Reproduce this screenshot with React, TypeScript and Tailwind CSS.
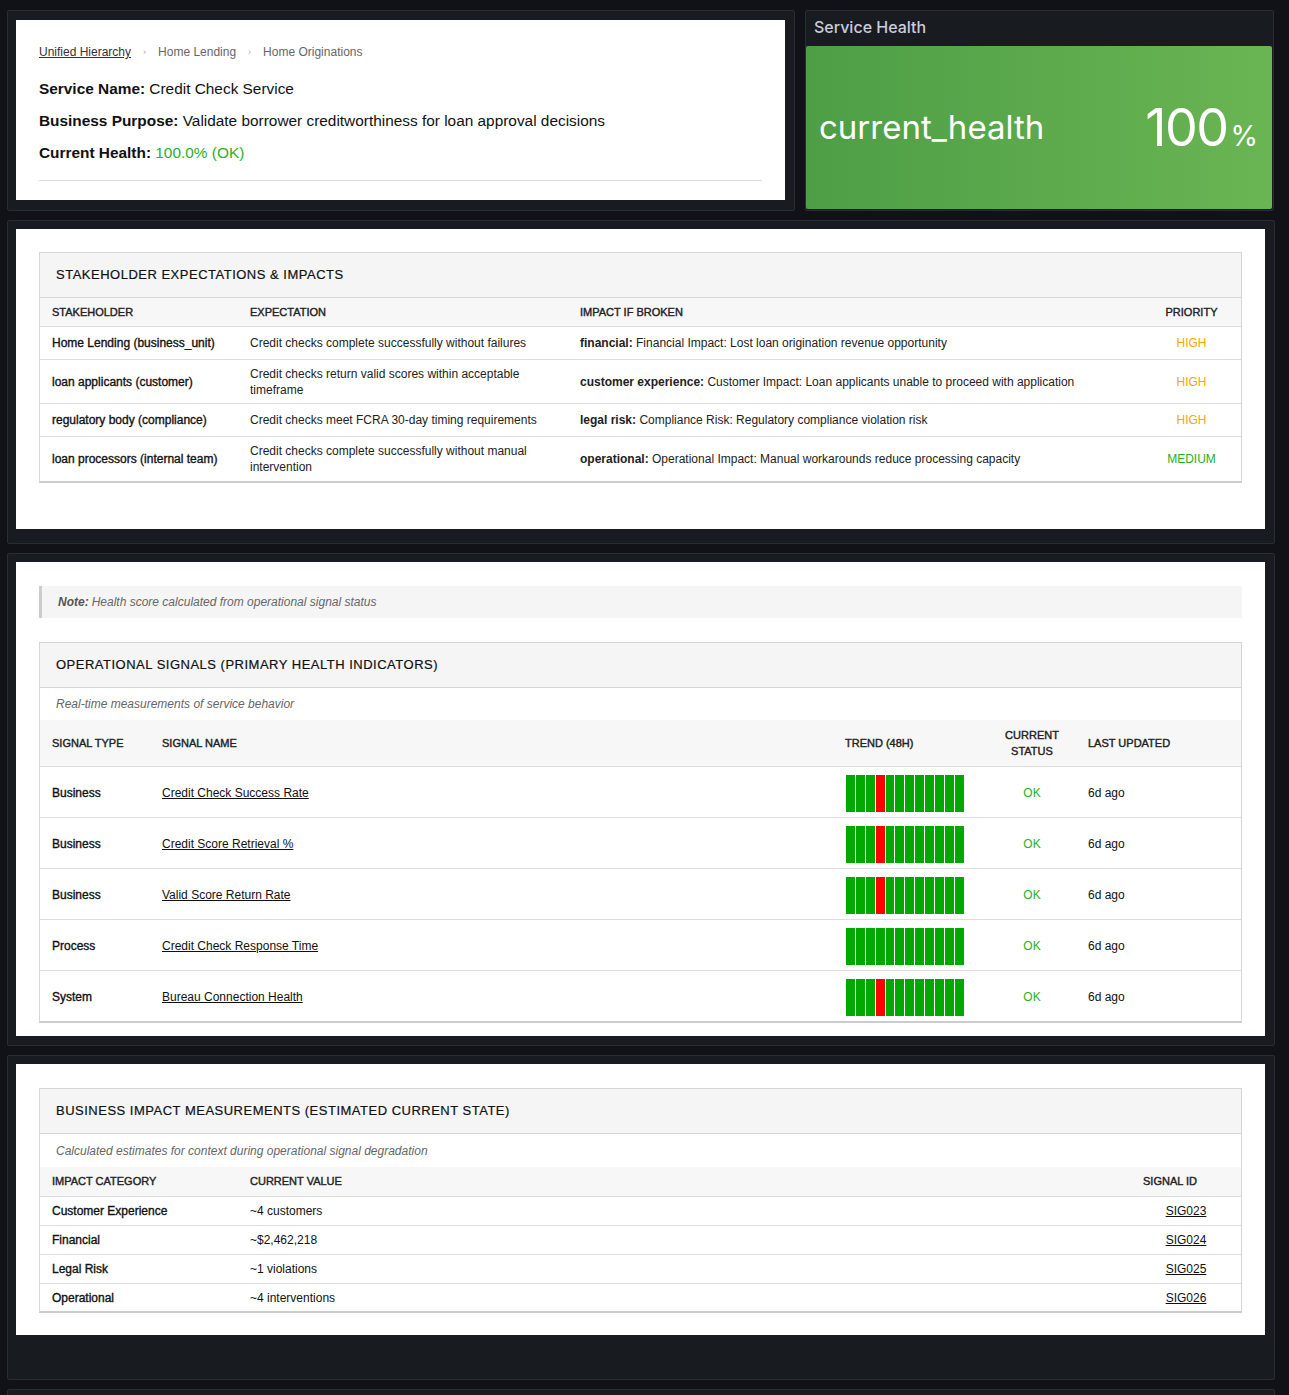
import React from "react";

const stakeholders = [
  {
    s: "Home Lending (business_unit)",
    e: "Credit checks complete successfully without failures",
    k: "financial:",
    i: "Financial Impact: Lost loan origination revenue opportunity",
    p: "HIGH",
    h: "h-[33px]",
  },
  {
    s: "loan applicants (customer)",
    e: "Credit checks return valid scores within acceptable timeframe",
    k: "customer experience:",
    i: "Customer Impact: Loan applicants unable to proceed with application",
    p: "HIGH",
    h: "h-[44px]",
  },
  {
    s: "regulatory body (compliance)",
    e: "Credit checks meet FCRA 30-day timing requirements",
    k: "legal risk:",
    i: "Compliance Risk: Regulatory compliance violation risk",
    p: "HIGH",
    h: "h-[33px]",
  },
  {
    s: "loan processors (internal team)",
    e: "Credit checks complete successfully without manual intervention",
    k: "operational:",
    i: "Operational Impact: Manual workarounds reduce processing capacity",
    p: "MEDIUM",
    h: "h-[45px]",
  },
];

const signals = [
  { t: "Business", n: "Credit Check Success Rate", red: 3 },
  { t: "Business", n: "Credit Score Retrieval %", red: 3 },
  { t: "Business", n: "Valid Score Return Rate", red: 3 },
  { t: "Process", n: "Credit Check Response Time", red: -1 },
  { t: "System", n: "Bureau Connection Health", red: 3 },
];

const impacts = [
  { c: "Customer Experience", v: "~4 customers", id: "SIG023", h: "h-[29px]" },
  { c: "Financial", v: "~$2,462,218", id: "SIG024", h: "h-[29px]" },
  { c: "Legal Risk", v: "~1 violations", id: "SIG025", h: "h-[29px]" },
  { c: "Operational", v: "~4 interventions", id: "SIG026", h: "h-[28px]" },
];

function Panel({ className, children }: { className: string; children?: React.ReactNode }) {
  return (
    <div className={"rounded-[2px] border border-[#2a2d33] bg-[#181b1f] " + className}>{children}</div>
  );
}

function TableTitle({ children }: { children: React.ReactNode }) {
  return (
    <div className="flex h-[45px] items-center border-b border-[#d6d6d6] bg-[#f5f5f5] px-[16px] text-[13px] tracking-[0.5px] text-[#111] [-webkit-text-stroke:0.2px_currentColor]">
      {children}
    </div>
  );
}

function Subtitle({ children, h }: { children: React.ReactNode; h: string }) {
  return (
    <div className={"flex items-center px-[16px] text-[12px] italic text-[#666] " + h}>{children}</div>
  );
}

function Trend({ red }: { red: number }) {
  const bars = Array.from({ length: 12 }, (_, i) => i);
  return (
    <div className="ml-px flex h-[37px] gap-px">
      {bars.map((i) => (
        <div
          key={i}
          className={"h-full w-[8.9px] " + (i === red ? "bg-[#ff0000]" : "bg-[#00a800]")}
        />
      ))}
    </div>
  );
}

const semi = "[-webkit-text-stroke:0.35px_currentColor]";
const head = "text-[11px] text-[#222] [-webkit-text-stroke:0.4px_currentColor]";

export default function App() {
  return (
    <div className="min-h-[1395px] bg-[#111217] pl-[7px] pt-[10px] font-['Liberation_Sans',Arial,sans-serif] text-[#222]">
      <div className="w-[1268px]">
        {/* Top row */}
        <div className="flex gap-[10px]">
          <Panel className="h-[201px] w-[788px] px-[8px] pt-[9px]">
            <div className="h-[180px] w-[769px] bg-white px-[23px] pt-[24px]">
              <div className="flex h-[16px] items-center text-[12px] leading-[16px]">
                <span className="text-[#333] underline">Unified Hierarchy</span>
                <span className="mx-[12px] text-[9px] text-[#aaa]">›</span>
                <span className="text-[#666]">Home Lending</span>
                <span className="mx-[12px] text-[9px] text-[#aaa]">›</span>
                <span className="text-[#666]">Home Originations</span>
              </div>
              <div className="mt-[18px] flex flex-col gap-[10px] text-[15.4px] leading-[22px] text-[#111]">
                <p>
                  <span className="font-bold">Service Name:</span> Credit Check Service
                </p>
                <p>
                  <span className="font-bold">Business Purpose:</span> Validate borrower creditworthiness for loan
                  approval decisions
                </p>
                <p>
                  <span className="font-bold">Current Health:</span>{" "}
                  <span className="text-[#2ab02a]">100.0% (OK)</span>
                </p>
              </div>
              <div className="mt-[16px] h-px w-full bg-[#dcdcdc]" />
            </div>
          </Panel>

          <Panel className="flex h-[201px] w-[469px] flex-col font-['Inter',sans-serif]">
            <div className="flex h-[35px] items-center px-[8px] pb-[3px] text-[16px] font-medium text-[#ccccdc]">
              Service Health
            </div>
            <div className="mb-px mr-px flex h-[163px] items-center justify-between rounded-[2px] bg-linear-to-r from-[#4d9e46] to-[#6ab553] pl-[13px] pr-[14px] text-white">
              <span className="text-[33px] leading-none">current_health</span>
              <span className="flex items-baseline leading-none">
                <span className="text-[52px] tracking-[-1.5px]">100</span>
                <span className="ml-[3px] text-[28px]">%</span>
              </span>
            </div>
          </Panel>
        </div>

        {/* Stakeholder panel */}
        <Panel className="mt-[9px] h-[324px] px-[8px] pt-[8px]">
          <div className="h-[300px] w-[1249px] bg-white px-[23px] pt-[23px]">
            <div className="border border-b-2 border-[#d6d6d6] border-b-[#cccccc]">
              <TableTitle>STAKEHOLDER EXPECTATIONS &amp; IMPACTS</TableTitle>
              <div className={"grid h-[28px] grid-cols-[198px_330px_574px_1fr] items-center bg-[#f7f7f7] " + head}>
                <div className="pl-[12px]">STAKEHOLDER</div>
                <div className="pl-[12px]">EXPECTATION</div>
                <div className="pl-[12px]">IMPACT IF BROKEN</div>
                <div className="text-center">PRIORITY</div>
              </div>
              {stakeholders.map((r) => (
                <div
                  key={r.s}
                  className={
                    "grid grid-cols-[198px_330px_574px_1fr] items-center border-t border-[#dddddd] text-[12px] leading-[16px] " +
                    r.h
                  }
                >
                  <div className={"pl-[12px] pr-[8px] text-[#111] " + semi}>{r.s}</div>
                  <div className="pl-[12px] pr-[20px]">{r.e}</div>
                  <div className="pl-[12px]">
                    <span className="font-bold">{r.k}</span> {r.i}
                  </div>
                  <div className={"text-center " + (r.p === "HIGH" ? "text-[#ffa500]" : "text-[#22b022]")}>
                    {r.p}
                  </div>
                </div>
              ))}
            </div>
          </div>
        </Panel>

        {/* Signals panel */}
        <Panel className="mt-[9px] h-[493px] px-[8px] pt-[8px]">
          <div className="h-[474px] w-[1249px] bg-white px-[23px] pt-[24px]">
            <div className="flex h-[32px] items-center border-l-[3px] border-[#cccccc] bg-[#f5f5f5] pl-[16px] text-[12px] italic text-[#666]">
              <span className="font-bold text-[#555]">Note:</span>
              <span className="ml-[3px]">Health score calculated from operational signal status</span>
            </div>
            <div className="mt-[24px] border border-b-2 border-[#d6d6d6] border-b-[#cccccc]">
              <TableTitle>OPERATIONAL SIGNALS (PRIMARY HEALTH INDICATORS)</TableTitle>
              <Subtitle h="h-[32px]">Real-time measurements of service behavior</Subtitle>
              <div
                className={
                  "grid h-[46px] grid-cols-[110px_683px_155px_88px_1fr] items-center bg-[#f7f7f7] leading-[16px] " + head
                }
              >
                <div className="pl-[12px]">SIGNAL TYPE</div>
                <div className="pl-[12px]">SIGNAL NAME</div>
                <div className="pl-[12px]">TREND (48H)</div>
                <div className="text-center">
                  CURRENT
                  <br />
                  STATUS
                </div>
                <div className="pl-[12px]">LAST UPDATED</div>
              </div>
              {signals.map((s) => (
                <div
                  key={s.n}
                  className="grid h-[51px] grid-cols-[110px_683px_155px_88px_1fr] items-center border-t border-[#dddddd] pt-[2px] text-[12px]"
                >
                  <div className={"pl-[12px] text-[#111] " + semi}>{s.t}</div>
                  <div className="pl-[12px]">
                    <span className="text-[#111] underline">{s.n}</span>
                  </div>
                  <div className="pl-[12px]">
                    <Trend red={s.red} />
                  </div>
                  <div className="text-center text-[#2ab02a]">OK</div>
                  <div className="pl-[12px] text-[#111]">6d ago</div>
                </div>
              ))}
            </div>
          </div>
        </Panel>

        {/* Business impact panel */}
        <Panel className="mt-[9px] h-[325px] px-[8px] pt-[8px]">
          <div className="h-[271px] w-[1249px] bg-white px-[23px] pt-[24px]">
            <div className="border border-b-2 border-[#d6d6d6] border-b-[#cccccc]">
              <TableTitle>BUSINESS IMPACT MEASUREMENTS (ESTIMATED CURRENT STATE)</TableTitle>
              <Subtitle h="h-[33px]">Calculated estimates for context during operational signal degradation</Subtitle>
              <div className={"grid h-[29px] grid-cols-[198px_893px_1fr] items-center bg-[#f7f7f7] " + head}>
                <div className="pl-[12px]">IMPACT CATEGORY</div>
                <div className="pl-[12px]">CURRENT VALUE</div>
                <div className="pl-[12px]">SIGNAL ID</div>
              </div>
              {impacts.map((r) => (
                <div
                  key={r.c}
                  className={
                    "grid grid-cols-[198px_893px_1fr] items-center border-t border-[#dddddd] text-[12px] " + r.h
                  }
                >
                  <div className={"pl-[12px] text-[#111] " + semi}>{r.c}</div>
                  <div className="pl-[12px] text-[#111]">{r.v}</div>
                  <div className="text-center">
                    <span className="text-[#111] underline">{r.id}</span>
                  </div>
                </div>
              ))}
            </div>
          </div>
        </Panel>

        <Panel className="mt-[9px] h-[40px]" />
      </div>
    </div>
  );
}
